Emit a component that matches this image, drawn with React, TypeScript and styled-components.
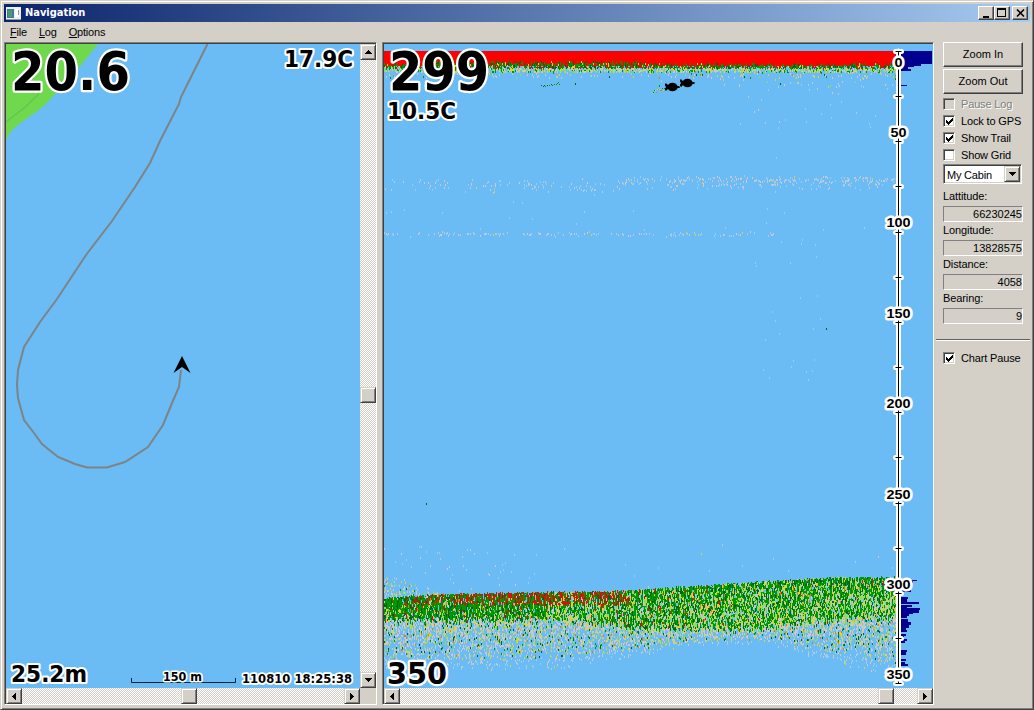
import React from 'react';
import styled, { createGlobalStyle, css } from 'styled-components';

const FACE = '#d4d0c8';
const WATER = '#6bbcf4';

const Global = createGlobalStyle`
  *, *::before, *::after { box-sizing: border-box; }
  html, body { margin: 0; padding: 0; overflow: hidden; }
  body { font: 11px/13px "Liberation Sans", Arial, sans-serif; letter-spacing: -0.1px; color: #000; background: ${FACE}; }
`;

const raised = css`
  background: ${FACE};
  border: 1px solid;
  border-color: ${FACE} #404040 #404040 ${FACE};
  box-shadow: inset 1px 1px 0 #fff, inset -1px -1px 0 #808080;
`;

const Window = styled.div`
  width: 1034px;
  height: 710px;
  display: flex;
  flex-direction: column;
  background: ${FACE};
  border: 1px solid;
  border-color: ${FACE} #404040 #404040 ${FACE};
  box-shadow: inset 1px 1px 0 #fff, inset -1px -1px 0 #808080;
  padding: 3px;
`;

const TitleBar = styled.header`
  height: 18px;
  flex: none;
  display: flex;
  align-items: center;
  padding: 0 2px;
  background: linear-gradient(90deg, #0a246a, #a6caf0);
`;

const Title = styled.h1`
  margin: 0 auto 0 4px;
  font: bold 11px/16px "DejaVu Sans Condensed", "DejaVu Sans", sans-serif;
  letter-spacing: -0.02px;
  color: #fff;
`;

const CaptionButton = styled.button<{ $gap?: boolean }>`
  ${raised}
  border-color: #fff #404040 #404040 #fff;
  box-shadow: inset -1px -1px 0 #808080;
  width: 16px;
  height: 14px;
  padding: 0;
  margin-left: ${p => (p.$gap ? 2 : 0)}px;
  display: grid;
  place-items: center;
`;

const MenuBar = styled.nav`
  height: 20px;
  flex: none;
  display: flex;
  gap: 12px;
  padding: 4px 6px 0;
  letter-spacing: -0.2px;
`;

const MenuItem = styled.span`
  u { text-underline-offset: 1px; }
`;

const Body = styled.main`
  flex: 1;
  min-height: 0;
  display: flex;
`;

const Pane = styled.section<{ $width: number; $gap?: number }>`
  width: ${p => p.$width}px;
  height: 663px;
  margin-right: ${p => p.$gap ?? 0}px;
  border: 1px solid;
  border-color: #808080 #fff #fff #808080;
  padding: 1px 0 0 1px;
  background: linear-gradient(90deg, #404040 1px, transparent 1px), linear-gradient(#404040 1px, ${FACE} 1px);
  display: grid;
  grid-template-columns: 1fr auto;
  grid-template-rows: 644px 16px;
`;

const Drawing = styled.svg`
  display: block;
  background: ${WATER};
  letter-spacing: 0;
`;

const Track = styled.div<{ $vertical?: boolean; $wide?: boolean }>`
  display: flex;
  flex-direction: ${p => (p.$vertical ? 'column' : 'row')};
  width: ${p => (p.$vertical ? '16px' : 'auto')};
  grid-column: ${p => (p.$wide ? '1 / 3' : 'auto')};
  background: conic-gradient(${FACE} 25%, #fff 0 50%, ${FACE} 0 75%, #fff 0) 0 0 / 2px 2px;
`;

const Space = styled.div<{ $size?: number }>`
  flex: ${p => (p.$size === undefined ? '1' : `0 0 ${p.$size}px`)};
`;

const ScrollPiece = styled.button`
  ${raised}
  width: 16px;
  height: 16px;
  padding: 0;
  flex: none;
  display: grid;
  place-items: center;
`;

const Side = styled.aside`
  flex: 1;
  display: flex;
  flex-direction: column;
`;

const Controls = styled.div`
  width: 80px;
  margin-left: 9px;
`;

const PushButton = styled.button`
  ${raised}
  border-color: #fff #404040 #404040 #fff;
  box-shadow: inset -1px -1px 0 #808080;
  display: block;
  width: 80px;
  height: 25px;
  margin-bottom: 2px;
  padding: 0 0 1px;
  font: inherit;
  letter-spacing: 0;
`;

const Check = styled.label<{ $disabled?: boolean }>`
  display: flex;
  align-items: center;
  height: 17px;
  gap: 6px;
  padding-bottom: 1px;
  white-space: nowrap;
  letter-spacing: -0.15px;
  color: ${p => (p.$disabled ? '#808080' : '#000')};
  text-shadow: ${p => (p.$disabled ? '1px 1px 0 #fff' : 'none')};
`;

const Box = styled.span<{ $disabled?: boolean }>`
  width: 12px;
  height: 12px;
  flex: none;
  display: grid;
  place-items: center;
  background: ${p => (p.$disabled ? FACE : '#fff')};
  border: 1px solid;
  border-color: #808080 #fff #fff #808080;
  box-shadow: inset 1px 1px 0 #404040, inset -1px -1px 0 ${FACE};
`;

const Select = styled.div`
  display: flex;
  width: 79px;
  height: 20px;
  margin: 0 0 6px;
  padding: 1px;
  background: #fff;
  border: 1px solid;
  border-color: #808080 #fff #fff #808080;
  box-shadow: inset 1px 1px 0 #404040, inset -1px -1px 0 ${FACE};
  span { flex: 1; padding: 3px 0 0 2px; white-space: nowrap; letter-spacing: -0.2px; }
`;

const Reading = styled.div`
  height: 34px;
`;

const ReadingLabel = styled.div`
  height: 16px;
  line-height: 13px;
`;

const ReadingValue = styled.output`
  display: block;
  width: 80px;
  height: 16px;
  border: 1px solid;
  border-color: #808080 #fff #fff #808080;
  text-align: right;
  line-height: 15px;
  letter-spacing: 0;
`;

const Divider = styled.hr`
  width: 94px;
  margin: 13px 0 9px 2px;
  border: 0;
  border-top: 1px solid #606060;
  border-bottom: 1px solid #fff;
`;

const Outlined = styled.text`
  font-family: "DejaVu Sans Condensed", "DejaVu Sans", sans-serif;
  font-weight: bold;
  fill: #000;
  stroke: #fff;
  stroke-linejoin: round;
  paint-order: stroke;
`;

const AxisLabel = styled(Outlined)`
  font-family: "Liberation Sans", Arial, sans-serif;
  font-size: 13.5px;
  stroke-width: 5px;
`;

const Arrow = ({ dir }: { dir: 'up' | 'down' | 'left' | 'right' }) => {
  const d = {
    up: 'M3 0h1v1h1v1h1v1h1v1H0V3h1V2h1V1h1z',
    down: 'M0 0h7v1H6v1H5v1H4v1H3V3H2V2H1V1H0z',
    left: 'M3 0h1v7H3V6H2V5H1V4H0V3h1V2h1V1h1z',
    right: 'M0 0h1v1h1v1h1v1h1v1H3v1H2v1H1v1H0z',
  }[dir];
  const flat = dir === 'up' || dir === 'down';
  return (
    <svg width={flat ? 7 : 4} height={flat ? 4 : 7} shapeRendering="crispEdges">
      <path d={d} />
    </svg>
  );
};

const Tick = () => (
  <svg width="7" height="7" shapeRendering="crispEdges">
    <path d="M0 2h1v1h1v1h1V3h1V2h1V1h1V0h1v3H6v1H5v1H4v1H3v1H2V6H1V5H0z" />
  </svg>
);

type Ink = 'red' | 'green' | 'dark' | 'lime' | 'yellow' | 'grey' | 'pale' | 'pink' | 'orange';
const INKS: Record<Ink, string> = {
  red: '#e01000',
  green: '#009a00',
  dark: '#006818',
  lime: '#8fd878',
  yellow: '#dcd435',
  grey: '#bccad6',
  pale: '#98cdf0',
  pink: '#d8c4d0',
  orange: '#c88820',
};

const lerp = (points: number[][], x: number) => {
  for (let i = 1; i < points.length; i++) {
    const [x0, y0] = points[i - 1];
    const [x1, y1] = points[i];
    if (x <= x1) return y0 + ((y1 - y0) * (x - x0)) / (x1 - x0);
  }
  return points[points.length - 1][1];
};

// Sea-bed profile, in pane coordinates: surface, end of the dense layer, end of the faint layer.
const SURFACE = [[0, 554], [60, 550], [120, 549], [240, 547], [370, 538], [440, 534], [512, 533]];
const DENSE = [[0, 575], [180, 575], [216, 579], [260, 585], [380, 584], [420, 578], [512, 572]];
const FAINT = [[0, 616], [100, 616], [190, 612], [260, 599], [300, 590], [385, 588], [430, 602], [512, 622]];

function buildEchoes() {
  let seed = 90210;
  const rnd = () => {
    seed = (seed * 1664525 + 1013904223) >>> 0;
    return seed / 4294967296;
  };
  const paths = {} as Record<Ink, string>;
  (Object.keys(INKS) as Ink[]).forEach(k => (paths[k] = ''));
  const dot = (ink: Ink, x: number, y: number, h = 2) => {
    paths[ink] += `M${x} ${Math.round(y)}h1v${h}h-1z`;
  };
  const pick = (weights: [Ink, number][]) => {
    let r = rnd() * weights.reduce((s, w) => s + w[1], 0);
    for (const [ink, w] of weights) {
      r -= w;
      if (r <= 0) return ink;
    }
    return weights[0][0];
  };
  const faintMix: [Ink, number][] = [['grey', 5], ['pink', 3], ['yellow', 2.5], ['lime', 2], ['dark', 0.9], ['green', 0.8], ['orange', 0.4]];
  const paleMix: [Ink, number][] = [['pale', 5], ['grey', 4], ['pink', 2], ['yellow', 0.3]];

  for (let x = 0; x < 512; x++) {
    // transmit pulse fringe
    const lift = x > 40 && x < 260 ? 2 : 0;
    for (let y = 19 - lift + Math.floor(rnd() * 4); y < 28; y += 1 + Math.floor(rnd() * 2)) {
      const low = y > 23;
      if (rnd() < (low ? 0.6 : 0.75)) {
        dot(pick(low ? [['yellow', 4], ['lime', 3], ['green', 3], ['grey', 3]] : [['green', 5], ['dark', 3], ['yellow', 1], ['red', 3]]), x, y);
      }
    }
    if (rnd() < 0.25) dot(pick(faintMix), x, 27 + rnd() * 6);
    if (rnd() < (x > 350 ? 0.22 : 0.05)) dot(pick(faintMix), x, 29 + rnd() * 13);
    if (x > 350 && rnd() < 0.14) dot(pick(paleMix), x, 36 + rnd() * 50);

    // thermocline layers
    const clump = 0.55 + 0.45 * Math.sin(x / 5.3) * Math.sin(x / 17 + 1);
    for (let k = 0; k < 4; k++) {
      if (rnd() < (x < 110 ? 0.16 : 0.28) * clump) dot(pick(paleMix), x, 133 + (rnd() + rnd()) * 7.5 - (x > 240 ? 2 : 0));
    }
    if (x > 240 && rnd() < 0.4) dot(pick(paleMix), x, 132 + rnd() * 5);
    if (x < 390 && rnd() < 0.6 * clump) dot(pick(paleMix), x, 187 + (rnd() + rnd()) * 2.5);
    if (rnd() < 0.05) dot('pale', x, 146 + rnd() * 45);
    if (x > 370 && x < 440 && rnd() < 0.4) dot('pale', x, 110 + rnd() * 230);
    if (rnd() < (x < 160 ? 0.3 : 0.05)) dot(pick(paleMix), x, 500 + rnd() * 46);

    // bottom echo
    const top = lerp(SURFACE, x);
    const mid = lerp(DENSE, x);
    const end = lerp(FAINT, x);
    if (x < 75) {
      for (let y = 533 + x * 0.24; y < top; y += 2) {
        if (rnd() < 0.3 * (1 - x / 90)) dot(pick(faintMix), x, y);
      }
    }
    let step = 2;
    for (let y = Math.round(top + rnd() * 2 - 1); y < end + 12; y += step) {
      step = 1 + Math.floor(rnd() * 3);
      if (y < mid + rnd() * 7 - 3) {
        const depth = (y - top) / (mid - top);
        const redZone = x > 20 && x < 245 && depth < 0.42;
        const mixed = x > 160 ? 1.7 : 0.6;
        if (rnd() < 0.95) {
          dot(
            pick([
              ['green', 7],
              ['dark', 2.8],
              ['red', redZone ? (x > 75 ? 9 : 4) * (1.2 - depth) : x < 340 ? 0.45 : 0.12],
              ['lime', mixed * (1 + depth * 1.8)],
              ['yellow', mixed * (0.8 + depth)],
              ['grey', mixed * (0.4 + depth * 1.5)],
              ['orange', 0.4],
            ]),
            x,
            y,
            step,
          );
        }
      } else {
        step = 2;
        const t = Math.max(0, (y - mid) / (end + 12 - mid));
        if (rnd() < 0.62 * Math.pow(1 - t, 0.75)) dot(pick(t > 0.75 ? paleMix : faintMix), x, y);
      }
    }
  }
  // small shoals
  for (let i = 0; i < 20; i += 1 + Math.floor(rnd() * 2)) dot(pick([['green', 4], ['dark', 3], ['yellow', 1]]), 157 + i, 41 - i * 0.17 + rnd() * 2, 1);
  for (let i = 0; i < 22; i++) dot(pick([['yellow', 3], ['green', 2], ['orange', 2]]), 268 + i, 46 - i * 0.2 + rnd() * 3, 1);
  for (let i = 0; i < 14; i++) dot(pick([['green', 3], ['lime', 1]]), 291 + i, 43 - i * 0.5 + rnd() * 2, 1);
  dot('dark', 42, 459);
  dot('dark', 442, 284);
  return paths;
}

const ECHOES = buildEchoes();

// A-scope bars: [top, height, length]
const SCOPE = [
  [7, 13, 31], [20, 2, 20], [22, 1, 13], [23, 2, 7], [25, 2, 10], [41, 1, 6],
  [536, 1, 16], [537, 2, 12], [541, 2, 8], [546, 2, 10], [553, 2, 7], [555, 3, 6], [558, 2, 18],
  [561, 2, 11], [563, 1, 6], [564, 2, 19], [566, 3, 18], [569, 1, 12], [570, 2, 8], [572, 2, 6],
  [575, 3, 7], [578, 3, 10], [581, 3, 8], [584, 2, 5], [586, 2, 6], [590, 2, 5], [592, 2, 3],
  [595, 2, 6], [597, 2, 4], [606, 2, 6], [608, 3, 5], [615, 2, 5], [618, 2, 4], [620, 2, 7],
];

const Fish = ({ x, y }: { x: number; y: number }) => (
  <g transform={`translate(${x} ${y})`}>
    <ellipse rx="5.2" ry="4.3" />
    <path d="M-7.500-3.500h1.500l3 3v1l-3 3h-1.500v-2l1-1.500-1-1.500zM4-1h3v2H4z" />
  </g>
);

const MapView = () => (
  <Drawing width="354" height="644">
    <path fill="#70d84c" d="M0 0h92L80 15 66 31 50 49 39 61 30 68 17 77 7 85 3 90 0 96z" />
    <path fill="none" stroke="#62c652" strokeWidth="1.5" d="M0 78L18 64 33 50" />
    <path
      fill="none"
      stroke="#7c8488"
      strokeWidth="2"
      d="M201.500 0L188 27 175 53 173 60 154 97 144 119 129 143 106 177 80 211 51 255 34 278 18 303 12 326 11 341 12 354 18 376 28 389 36 400 52 413 69 420 81 423.500 101 423.500 119 418 142 403 157 381 166 359 173 343 175 326"
    />
    <path d="M176 312l8.500 17-8.500-6-8.500 6z" />
    <Outlined x="5" y="46" fontSize="53.500" strokeWidth="4.500" textLength="119" lengthAdjust="spacingAndGlyphs">20.6</Outlined>
    <Outlined x="278" y="22.500" fontSize="23" strokeWidth="4" textLength="69" lengthAdjust="spacingAndGlyphs">17.9C</Outlined>
    <Outlined x="5" y="638" fontSize="23.500" strokeWidth="4" textLength="76" lengthAdjust="spacingAndGlyphs">25.2m</Outlined>
    <path fill="none" stroke="#002030" d="M125.500 634v4.500h104V634" />
    <Outlined x="157" y="637" fontSize="12" strokeWidth="3" textLength="39" lengthAdjust="spacingAndGlyphs">150 m</Outlined>
    <Outlined x="236" y="639" fontSize="12.500" strokeWidth="3.500" textLength="110" lengthAdjust="spacingAndGlyphs">110810 18:25:38</Outlined>
  </Drawing>
);

const AXIS_X = 514.5;
const ticks = Array.from({ length: 15 }, (_, i) => Math.round(7 + i * 45.15) + 0.5);
const axisPath = `M${AXIS_X} 7V639.500` + ticks.map(y => `M${AXIS_X - 3} ${y}h6`).join('');

const SonarView = () => (
  <Drawing width="549" height="644">
    <rect y="7" width="514" height="15" fill="#f00" />
    <g shapeRendering="crispEdges">
      {(Object.keys(INKS) as Ink[]).map(ink => (
        <path key={ink} fill={INKS[ink]} d={ECHOES[ink]} />
      ))}
      {SCOPE.map(([y, h, w]) => (
        <rect key={y} x="517" y={y} width={w} height={h} fill="#000090" />
      ))}
    </g>
    <Fish x={288.5} y={43} />
    <Fish x={303.5} y={39} />
    <path d={axisPath} stroke="#fff" strokeWidth="5" strokeLinecap="round" />
    <path d={axisPath} stroke="#000" />
    {[0, 50, 100, 150, 200, 250, 300, 350].map((n, i) => (
      <AxisLabel
        key={n}
        x="514.500"
        y={i === 0 ? 22.5 : 2.3 + i * 90.45}
        textAnchor="middle"
        textLength={String(n).length * 8}
        lengthAdjust="spacingAndGlyphs"
      >
        {n}
      </AxisLabel>
    ))}
    <Outlined x="5" y="45.500" fontSize="53.500" strokeWidth="4.500" textLength="100" lengthAdjust="spacingAndGlyphs">299</Outlined>
    <Outlined x="3" y="74.500" fontSize="23" strokeWidth="4" textLength="69" lengthAdjust="spacingAndGlyphs">10.5C</Outlined>
    <Outlined x="3" y="639.500" fontSize="30" strokeWidth="4.500" textLength="60" lengthAdjust="spacingAndGlyphs">350</Outlined>
  </Drawing>
);

const readings = [
  ['Lattitude:', '66230245'],
  ['Longitude:', '13828575'],
  ['Distance:', '4058'],
  ['Bearing:', '9'],
];

const CheckRow = ({ label, on, disabled }: { label: string; on?: boolean; disabled?: boolean }) => (
  <Check $disabled={disabled}>
    <Box $disabled={disabled}>{on && <Tick />}</Box>
    {label}
  </Check>
);

export default function App() {
  return (
    <>
      <Global />
      <Window>
        <TitleBar>
          <svg width="15" height="13" shapeRendering="crispEdges">
            <path fill="#e8f0f4" d="M0 0h15v13H0z" />
            <path fill="#4878a0" d="M1 2h7v9H1z" />
            <path fill="#489870" d="M2 3h4v7H2z" />
            <path fill="#fff" d="M9 2h4v8H9z" />
            <path fill="#9098a0" d="M12 3h1v5h-1zM0 12h15v1H0z" />
          </svg>
          <Title>Navigation</Title>
          <CaptionButton>
            <svg width="12" height="10" shapeRendering="crispEdges"><path d="M3 8h6v2H3z" /></svg>
          </CaptionButton>
          <CaptionButton>
            <svg width="10" height="10" shapeRendering="crispEdges"><path fillRule="evenodd" d="M0 0h9v9H0zM1 2v6h7V2z" /></svg>
          </CaptionButton>
          <CaptionButton $gap>
            <svg width="9" height="8"><path stroke="#000" strokeWidth="1.6" d="M1 .5l7 7M8 .5l-7 7" /></svg>
          </CaptionButton>
        </TitleBar>
        <MenuBar>
          <MenuItem><u>F</u>ile</MenuItem>
          <MenuItem><u>L</u>og</MenuItem>
          <MenuItem><u>O</u>ptions</MenuItem>
        </MenuBar>
        <Body>
          <Pane $width={373} $gap={5}>
            <MapView />
            <Track $vertical>
              <ScrollPiece><Arrow dir="up" /></ScrollPiece>
              <Space $size={327} />
              <ScrollPiece />
              <Space />
              <ScrollPiece><Arrow dir="down" /></ScrollPiece>
            </Track>
            <Track>
              <ScrollPiece><Arrow dir="left" /></ScrollPiece>
              <Space $size={159} />
              <ScrollPiece />
              <Space />
              <ScrollPiece><Arrow dir="right" /></ScrollPiece>
            </Track>
          </Pane>
          <Pane $width={552}>
            <SonarView />
            <Track $wide style={{ gridRow: 2 }}>
              <ScrollPiece><Arrow dir="left" /></ScrollPiece>
              <Space />
              <ScrollPiece />
              <Space $size={23} />
              <ScrollPiece><Arrow dir="right" /></ScrollPiece>
            </Track>
          </Pane>
          <Side>
            <Controls>
              <PushButton>Zoom In</PushButton>
              <PushButton>Zoom Out</PushButton>
              <CheckRow label="Pause Log" disabled />
              <CheckRow label="Lock to GPS" on />
              <CheckRow label="Show Trail" on />
              <CheckRow label="Show Grid" />
              <Select>
                <span>My Cabin</span>
                <ScrollPiece><Arrow dir="down" /></ScrollPiece>
              </Select>
              {readings.map(([label, value]) => (
                <Reading key={label}>
                  <ReadingLabel>{label}</ReadingLabel>
                  <ReadingValue>{value}</ReadingValue>
                </Reading>
              ))}
            </Controls>
            <Divider />
            <Controls>
              <CheckRow label="Chart Pause" on />
            </Controls>
          </Side>
        </Body>
      </Window>
    </>
  );
}
